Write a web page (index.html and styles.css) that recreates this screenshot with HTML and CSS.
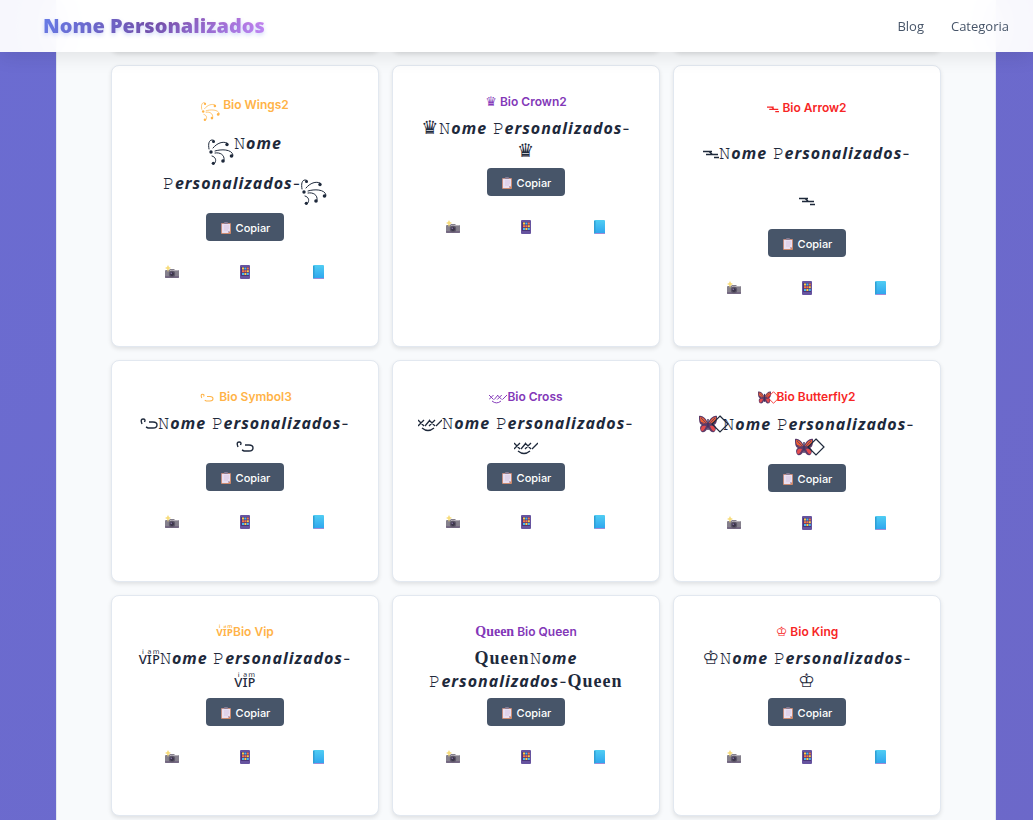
FILE: index.html
```html
<!DOCTYPE html>
<html lang="pt-BR">
<head>
    <meta charset="UTF-8">
    <meta name="viewport" content="width=device-width, initial-scale=1.0">
    <title>Nome Personalizados</title>
    <link rel="stylesheet" href="styles.css">
</head>
<body>
    <!-- shared icons -->
    <svg class="sprite" aria-hidden="true">
        <defs>
            <linearGradient id="bookFill" x1="0" y1="0" x2="0" y2="1">
                <stop offset="0" stop-color="#50cdf3"/>
                <stop offset="1" stop-color="#2da4ee"/>
            </linearGradient>
            <linearGradient id="boardFill" x1="0" y1="0" x2="1" y2="1">
                <stop offset="0" stop-color="#bd8d88"/>
                <stop offset="1" stop-color="#d28a66"/>
            </linearGradient>
        </defs>
        <symbol id="clipboard" viewBox="0 0 12 12">
            <rect x="1" y="1" width="10" height="11" rx="1" fill="url(#boardFill)"/>
            <path d="M2 2h8v7l-2 2H2z" fill="#eadff0"/>
            <path d="M8 11V9h2z" fill="#b9a5c6"/>
            <rect x="4" y="0" width="4" height="2" rx="1" fill="#867b93"/>
            <path d="M4 4h5M4 6h5M4 8h4" stroke="#c9bbdb" stroke-width=".6"/>
        </symbol>
        <symbol id="camera" viewBox="0 0 14 14">
            <path d="M1 5h3l1-1h4l1 1h3q1 0 1 1v6q0 1-1 1H1q-1 0-1-1V6q0-1 1-1z" fill="#85808c"/>
            <path d="M0 11h14v1q0 1-1 1H1q-1 0-1-1z" fill="#746882"/>
            <path d="M5 5h8v1H5z" fill="#b4afb8"/>
            <circle cx="7" cy="9" r="3.2" fill="#5d5768"/>
            <circle cx="7" cy="9" r="2" fill="#3c354a"/>
            <circle cx="6.3" cy="8.2" r=".8" fill="#8b7aab"/>
            <path d="M3 0l1 2 2 1-2 1-1 3-1-3-2-1 2-1z" fill="#f7dc7a"/>
        </symbol>
        <symbol id="phone" viewBox="0 0 14 14">
            <rect x="2" y="0" width="10" height="14" rx="1" fill="#66539f"/>
            <rect x="3" y="2" width="8" height="9" fill="#4a3578"/>
            <path d="M4 2.5h2v2H4zM8.8 5.2h2v2h-2zM6.4 8h2v2h-2z" fill="#ffcc45"/>
            <path d="M6.4 2.5h2v2h-2zM4 8h2v2H4zM8.8 8h2v2h-2z" fill="#45baf2"/>
            <path d="M8.8 2.5h2v2h-2zM4 5.2h2v2H4zM6.4 5.2h2v2h-2z" fill="#f57849"/>
        </symbol>
        <symbol id="book" viewBox="0 0 14 14">
            <rect x="2" y="0" width="11" height="14" rx="1" fill="url(#bookFill)"/>
            <path d="M2 1h1.5v12H2z" fill="#2f9fd4"/>
            <path d="M3 13h10v1H3z" fill="#a28bd4"/>
        </symbol>
        <symbol id="wings" viewBox="0 0 26 26">
            <g fill="none" stroke="currentColor" stroke-width="1" stroke-linecap="round">
                <path d="M1 10C0 5 1 1 4 1q3 0 2 2"/>
                <path d="M5 9C9 4 15 2 19 4"/>
                <path d="M7 12C13 10 24 10 25 16"/>
                <path d="M7 14C12 13 17 16 16 21"/>
                <path d="M4 17C8 18 9 22 6 25"/>
            </g>
            <g fill="currentColor">
                <circle cx="3" cy="13" r="1.7"/>
                <circle cx="5.5" cy="2.6" r="1.5"/>
                <circle cx="19" cy="5.5" r="1.7"/>
                <circle cx="23.5" cy="17" r="1.8"/>
                <circle cx="15" cy="22" r="1.8"/>
                <circle cx="5.3" cy="24.3" r="1.6"/>
            </g>
        </symbol>
        <symbol id="arrow" viewBox="0 0 16 16">
            <path d="M0 5.5h9M3 8.5h12M9 8l-3-2.5M11 11.5h5" fill="none" stroke="currentColor" stroke-width="1.5"/>
        </symbol>
        <symbol id="hook" viewBox="0 0 18 16">
            <path d="M2 8Q0 3 3 3T4.500 6M6 11l2 1h5q4 0 4-3t-4-3H9" fill="none" stroke="currentColor" stroke-width="1.4"/>
        </symbol>
        <symbol id="cross" viewBox="0 0 24 16">
            <path d="M0 4l6 6M0 10l6-6M7 10l5-6M11 4l6 6M11 10l6-6M18 10l6-6M4 12q6 5 12 0" fill="none" stroke="currentColor" stroke-width="1.3"/>
        </symbol>
        <symbol id="butterfly" viewBox="0 0 18 18">
            <path d="M9 8C7 3 3 0 0 1c0 4 0 8 3 9-3 1-2 6 0 7 3 1 5-2 6-5 1 3 3 6 6 5 2-1 3-6 0-7 3-1 3-5 3-9-3-1-7 2-9 7z" fill="#5c3a68"/>
            <path d="M8 8C6 4 4 2 1 2c0 4 1 6 4 7zM10 8c2-4 4-6 7-6 0 4-1 6-4 7z" fill="#ee6035"/>
            <path d="M7 11c-3-1-5 0-5 3s3 3 5-3zM11 11c3-1 5 0 5 3s-3 3-5-3z" fill="#e44b4e"/>
            <path d="M8 9L2 3M7 9L1 7M10 9l6-6M11 9l6-2" stroke="#5c3a68" stroke-width=".8"/>
            <path d="M9 4v11" stroke="#43315d" stroke-width="1.4"/>
        </symbol>
        <symbol id="diamond" viewBox="0 0 18 18">
            <path d="M9 1l8 8-8 8-8-8z" fill="none" stroke="currentColor" stroke-width="1.2"/>
        </symbol>
    </svg>

    <header class="header">
        <a class="logo" href="#">Nome Personalizados</a>
        <nav class="nav">
            <a href="#">Blog</a>
            <a href="#">Categoria</a>
        </nav>
    </header>

    <main class="container">
        <div class="grid">
            <div class="card card-passed"></div>
            <div class="card card-passed"></div>
            <div class="card card-passed"></div>

            <article class="card wings">
                <h3 class="title gold"><svg class="sym"><use href="#wings"/></svg> Bio Wings2</h3>
                <p class="name"><svg class="sym"><use href="#wings"/></svg>𝙽<em>ome</em><br>𝙿<em>ersonalizados</em>-<svg class="sym"><use href="#wings"/></svg></p>
                <button class="copy" type="button"><svg><use href="#clipboard"/></svg>Copiar</button>
                <div class="share">
                    <a href="#" aria-label="Instagram"><svg><use href="#camera"/></svg></a>
                    <a href="#" aria-label="WhatsApp"><svg><use href="#phone"/></svg></a>
                    <a href="#" aria-label="Facebook"><svg><use href="#book"/></svg></a>
                </div>
            </article>

            <article class="card">
                <h3 class="title purple"><span class="crown">♛</span> Bio Crown2</h3>
                <p class="name"><span class="crown">♛</span>𝙽<em>ome</em> 𝙿<em>ersonalizados</em>-<br><span class="crown">♛</span></p>
                <button class="copy" type="button"><svg><use href="#clipboard"/></svg>Copiar</button>
                <div class="share">
                    <a href="#" aria-label="Instagram"><svg><use href="#camera"/></svg></a>
                    <a href="#" aria-label="WhatsApp"><svg><use href="#phone"/></svg></a>
                    <a href="#" aria-label="Facebook"><svg><use href="#book"/></svg></a>
                </div>
            </article>

            <article class="card arrow">
                <h3 class="title red"><svg class="sym"><use href="#arrow"/></svg> Bio Arrow2</h3>
                <p class="name"><svg class="sym"><use href="#arrow"/></svg>𝙽<em>ome</em> 𝙿<em>ersonalizados</em>-<br><svg class="sym"><use href="#arrow"/></svg></p>
                <button class="copy" type="button"><svg><use href="#clipboard"/></svg>Copiar</button>
                <div class="share">
                    <a href="#" aria-label="Instagram"><svg><use href="#camera"/></svg></a>
                    <a href="#" aria-label="WhatsApp"><svg><use href="#phone"/></svg></a>
                    <a href="#" aria-label="Facebook"><svg><use href="#book"/></svg></a>
                </div>
            </article>

            <article class="card hook">
                <h3 class="title gold"><svg class="sym"><use href="#hook"/></svg> Bio Symbol3</h3>
                <p class="name"><svg class="sym"><use href="#hook"/></svg>𝙽<em>ome</em> 𝙿<em>ersonalizados</em>-<br><svg class="sym"><use href="#hook"/></svg></p>
                <button class="copy" type="button"><svg><use href="#clipboard"/></svg>Copiar</button>
                <div class="share">
                    <a href="#" aria-label="Instagram"><svg><use href="#camera"/></svg></a>
                    <a href="#" aria-label="WhatsApp"><svg><use href="#phone"/></svg></a>
                    <a href="#" aria-label="Facebook"><svg><use href="#book"/></svg></a>
                </div>
            </article>

            <article class="card cross">
                <h3 class="title purple"><svg class="sym"><use href="#cross"/></svg>Bio Cross</h3>
                <p class="name"><svg class="sym"><use href="#cross"/></svg>𝙽<em>ome</em> 𝙿<em>ersonalizados</em>-<br><svg class="sym"><use href="#cross"/></svg></p>
                <button class="copy" type="button"><svg><use href="#clipboard"/></svg>Copiar</button>
                <div class="share">
                    <a href="#" aria-label="Instagram"><svg><use href="#camera"/></svg></a>
                    <a href="#" aria-label="WhatsApp"><svg><use href="#phone"/></svg></a>
                    <a href="#" aria-label="Facebook"><svg><use href="#book"/></svg></a>
                </div>
            </article>

            <article class="card butterfly">
                <h3 class="title red"><svg class="sym"><use href="#butterfly"/></svg><svg class="sym over"><use href="#diamond"/></svg>Bio Butterfly2</h3>
                <p class="name"><svg class="sym"><use href="#butterfly"/></svg><svg class="sym over"><use href="#diamond"/></svg>𝙽<em>ome</em> 𝙿<em>ersonalizados</em>-<br><svg class="sym"><use href="#butterfly"/></svg><svg class="sym over"><use href="#diamond"/></svg></p>
                <button class="copy" type="button"><svg><use href="#clipboard"/></svg>Copiar</button>
                <div class="share">
                    <a href="#" aria-label="Instagram"><svg><use href="#camera"/></svg></a>
                    <a href="#" aria-label="WhatsApp"><svg><use href="#phone"/></svg></a>
                    <a href="#" aria-label="Facebook"><svg><use href="#book"/></svg></a>
                </div>
            </article>

            <article class="card">
                <h3 class="title gold"><span class="vip">vͥɪͣᴘͫ</span>Bio Vip</h3>
                <p class="name"><span class="vip">vͥɪͣᴘͫ</span>𝙽<em>ome</em> 𝙿<em>ersonalizados</em>-<br><span class="vip">vͥɪͣᴘͫ</span></p>
                <button class="copy" type="button"><svg><use href="#clipboard"/></svg>Copiar</button>
                <div class="share">
                    <a href="#" aria-label="Instagram"><svg><use href="#camera"/></svg></a>
                    <a href="#" aria-label="WhatsApp"><svg><use href="#phone"/></svg></a>
                    <a href="#" aria-label="Facebook"><svg><use href="#book"/></svg></a>
                </div>
            </article>

            <article class="card">
                <h3 class="title purple"><span class="queen">Queen</span> Bio Queen</h3>
                <p class="name"><span class="queen">Queen</span>𝙽<em>ome</em> 𝙿<em>ersonalizados</em>-<span class="queen">Queen</span></p>
                <button class="copy" type="button"><svg><use href="#clipboard"/></svg>Copiar</button>
                <div class="share">
                    <a href="#" aria-label="Instagram"><svg><use href="#camera"/></svg></a>
                    <a href="#" aria-label="WhatsApp"><svg><use href="#phone"/></svg></a>
                    <a href="#" aria-label="Facebook"><svg><use href="#book"/></svg></a>
                </div>
            </article>

            <article class="card">
                <h3 class="title red"><span class="crown">♔</span> Bio King</h3>
                <p class="name"><span class="crown">♔</span>𝙽<em>ome</em> 𝙿<em>ersonalizados</em>-<br><span class="crown">♔</span></p>
                <button class="copy" type="button"><svg><use href="#clipboard"/></svg>Copiar</button>
                <div class="share">
                    <a href="#" aria-label="Instagram"><svg><use href="#camera"/></svg></a>
                    <a href="#" aria-label="WhatsApp"><svg><use href="#phone"/></svg></a>
                    <a href="#" aria-label="Facebook"><svg><use href="#book"/></svg></a>
                </div>
            </article>
        </div>
    </main>
</body>
</html>
```
FILE: styles.css
```css
* {
    margin: 0;
    padding: 0;
    box-sizing: border-box;
}

body {
    padding: 0 37px 0 56px;
    font-family: Inter, "Noto Sans", sans-serif;
    color: #1e293b;
    background: linear-gradient(135deg, #6b6cd1, #6c68c9);
}

a {
    color: inherit;
    text-decoration: none;
}

.sprite {
    position: absolute;
    width: 0;
    height: 0;
}

.header {
    position: fixed;
    top: 0;
    left: 0;
    right: 0;
    z-index: 10;
    display: flex;
    align-items: center;
    justify-content: space-between;
    height: 52px;
    padding: 0 24px 0 43px;
    background: rgba(255, 255, 255, 0.95);
    backdrop-filter: blur(20px);
    box-shadow: 0 4px 20px rgba(0, 0, 0, 0.1);
    font-family: "Open Sans", "Noto Sans", sans-serif;
}

.logo {
    font-size: 20px;
    font-weight: 800;
    line-height: 26px;
    background: linear-gradient(135deg, #667eea 0%, #764ba2 50%, #d78bfa 100%);
    -webkit-background-clip: text;
    background-clip: text;
    -webkit-text-fill-color: transparent;
    text-shadow: 0 2px 4px rgba(102, 126, 234, 0.3);
}

.nav {
    display: flex;
    gap: 27px;
    font-size: 13px;
    color: #475569;
}

.container {
    min-height: 100vh;
    padding: 0 54px 16px;
    background: #f8fafc;
    border: 1px solid #e2e8f0;
    border-top: 0;
}

.grid {
    display: grid;
    grid-template-columns: repeat(3, 1fr);
    gap: 13px;
}

.card {
    padding: 24px;
    text-align: center;
    background: #fff;
    border: 1px solid #e2e8f0;
    border-radius: 8px;
    box-shadow: 0 2px 4px rgba(0, 0, 0, 0.1);
}

/* row scrolled under the header */
.card-passed {
    height: 52px;
}

.title {
    margin-bottom: 4px;
    font-size: 12px;
    font-weight: 600;
    line-height: 23px;
}

.gold {
    color: #ffb347;
}

.purple {
    color: #8338b8;
}

.red {
    color: #f72626;
}

.name {
    margin-bottom: 5px;
    font-size: 16px;
    line-height: 23px;
    letter-spacing: 1px;
}

.name em {
    font-family: "Noto Sans", sans-serif;
    font-weight: 700;
    line-height: 1;
}

.crown {
    font-family: "DejaVu Sans", sans-serif;
    font-size: 19px;
    line-height: 1;
}

.title .crown {
    font-size: 13px;
}

.vip {
    font-family: "Noto Sans", sans-serif;
    line-height: 1;
    letter-spacing: 0;
}

.queen {
    font-family: "Liberation Serif", serif;
    font-size: 18px;
    font-weight: 700;
    line-height: 1;
}

.title .queen {
    font-size: 14px;
}

.sym {
    width: 16px;
    height: 16px;
    vertical-align: -3px;
}

.title .sym {
    width: 12px;
    height: 12px;
}

.wings .title {
    line-height: 29px;
}

.wings .name {
    margin-bottom: 10px;
    line-height: 40px;
}

.wings .sym {
    width: 26px;
    height: 26px;
    margin-bottom: -4px;
    vertical-align: -12px;
}

.wings .title .sym {
    width: 19px;
    height: 19px;
    vertical-align: -8px;
}

.arrow .title {
    line-height: 36px;
}

.arrow .name {
    line-height: 47px;
}

.hook .sym {
    width: 18px;
}

.cross .sym {
    width: 24px;
}

.cross .title .sym {
    width: 18px;
}

.butterfly .title {
    line-height: 24px;
}

.butterfly .sym {
    width: 18px;
    height: 18px;
}

.butterfly .title .sym {
    width: 13px;
    height: 13px;
}

.butterfly .over {
    margin: 0 -6px;
}

.butterfly .title .over {
    margin: 0 -4px;
}

.copy {
    display: inline-flex;
    align-items: center;
    justify-content: center;
    gap: 4px;
    height: 28px;
    padding: 2px 14px 0;
    font-family: inherit;
    font-size: 11px;
    font-weight: 500;
    color: #fff;
    background: #475569;
    border: 0;
    border-radius: 4px;
}

.copy svg {
    width: 12px;
    height: 12px;
}

.share {
    display: flex;
    margin: 16px 0 19px;
}

.share a {
    display: flex;
    flex: 1;
    align-items: center;
    justify-content: center;
    height: 30px;
}

.share svg {
    width: 14px;
    height: 14px;
}
```
